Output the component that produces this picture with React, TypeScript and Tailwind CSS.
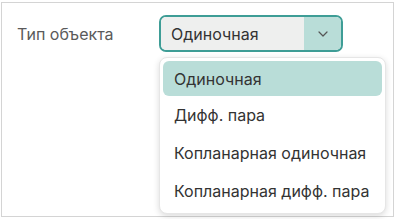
import React from "react";

export default function App() {
  const items = ["Одиночная", "Дифф. пара", "Копланарная одиночная", "Копланарная дифф. пара"];
  return (
    <div className="w-[395px] h-[219px] bg-white pt-[2px] pl-[1px]" style={{ fontFamily: "Inter, sans-serif" }}>
      <div className="relative w-[393px] h-[215px] border border-[#d4d4d4] bg-white">
        <div className="flex items-start pt-[12px] pl-[15px]">
          <div className="w-[142px] pt-[9px] text-[16px] text-[#5a5a5a] leading-[20px]">Тип объекта</div>
          <div className="flex w-[184px] h-[37px] rounded-[7px] border-2 border-[#3e9d96] overflow-hidden">
            <div className="flex-1 bg-[#eeefee] flex items-center pl-[10px] text-[16px] text-[#333]">Одиночная</div>
            <div className="w-[37px] bg-[#b9ddd8] flex items-center justify-center">
              <svg width="14" height="14" viewBox="0 0 14 14" fill="none" stroke="#555" strokeWidth="1.2" strokeLinecap="round" strokeLinejoin="round">
                <path d="M3 5 L7 9 L11 5" />
              </svg>
            </div>
          </div>
        </div>
        <div className="absolute left-[157px] top-[54px] w-[227px] rounded-[8px] bg-white border border-[#e6e6e6] shadow-[0_2px_6px_rgba(0,0,0,0.15)] p-[3px] flex flex-col">
          {items.map((t, i) => (
            <div
              key={t}
              className={
                i === 0
                  ? "h-[35px] rounded-[6px] bg-[#b9ddd8] flex items-center pl-[11px] text-[16px] text-[#333]"
                  : "h-[38px] flex items-center pl-[11px] text-[16px] text-[#333]"
              }
            >
              {t}
            </div>
          ))}
        </div>
      </div>
    </div>
  );
}
